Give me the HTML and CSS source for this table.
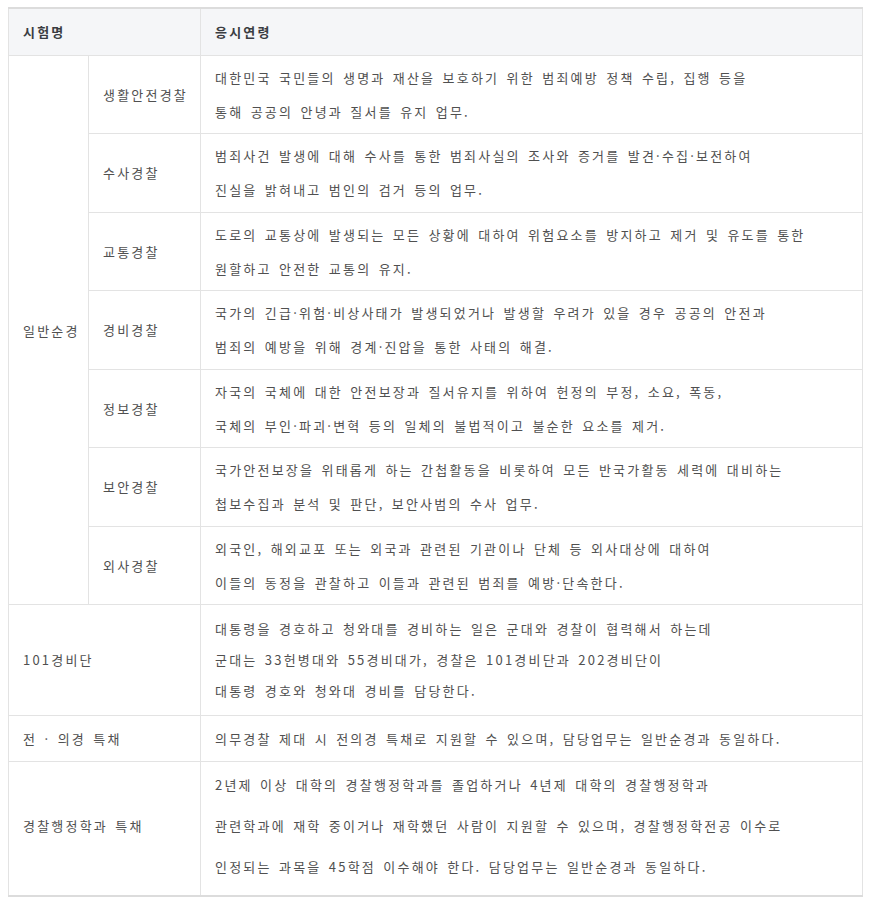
FILE: index.html
```html
<!DOCTYPE html>
<html lang="ko">
<head>
<meta charset="utf-8">
<link rel="stylesheet" href="styles.css">
</head>
<body>
<table class="exam">
  <colgroup>
    <col class="c-a">
    <col class="c-b">
    <col class="c-c">
  </colgroup>
  <thead>
    <tr>
      <th colspan="2">시험명</th>
      <th>응시연령</th>
    </tr>
  </thead>
  <tbody>
    <tr class="r2">
      <td rowspan="7" class="nowrap">일반순경</td>
      <td class="nowrap">생활안전경찰</td>
      <td>대한민국 국민들의 생명과 재산을 보호하기 위한 범죄예방 정책 수립, 집행 등을<br>통해 공공의 안녕과 질서를 유지 업무.</td>
    </tr>
    <tr class="r2 tall">
      <td>수사경찰</td>
      <td>범죄사건 발생에 대해 수사를 통한 범죄사실의 조사와 증거를 발견·수집·보전하여<br>진실을 밝혀내고 범인의 검거 등의 업무.</td>
    </tr>
    <tr class="r2">
      <td>교통경찰</td>
      <td>도로의 교통상에 발생되는 모든 상황에 대하여 위험요소를 방지하고 제거 및 유도를 통한<br>원할하고 안전한 교통의 유지.</td>
    </tr>
    <tr class="r2 tall">
      <td>경비경찰</td>
      <td>국가의 긴급·위험·비상사태가 발생되었거나 발생할 우려가 있을 경우 공공의 안전과<br>범죄의 예방을 위해 경계·진압을 통한 사태의 해결.</td>
    </tr>
    <tr class="r2">
      <td>정보경찰</td>
      <td>자국의 국체에 대한 안전보장과 질서유지를 위하여 헌정의 부정, 소요, 폭동,<br>국체의 부인·파괴·변혁 등의 일체의 불법적이고 불순한 요소를 제거.</td>
    </tr>
    <tr class="r2 tall">
      <td>보안경찰</td>
      <td>국가안전보장을 위태롭게 하는 간첩활동을 비롯하여 모든 반국가활동 세력에 대비하는<br>첩보수집과 분석 및 판단, 보안사범의 수사 업무.</td>
    </tr>
    <tr class="r2">
      <td>외사경찰</td>
      <td>외국인, 해외교포 또는 외국과 관련된 기관이나 단체 등 외사대상에 대하여<br>이들의 동정을 관찰하고 이들과 관련된 범죄를 예방·단속한다.</td>
    </tr>
    <tr class="r3">
      <td colspan="2">101경비단</td>
      <td>대통령을 경호하고 청와대를 경비하는 일은 군대와 경찰이 협력해서 하는데<br>군대는 33헌병대와 55경비대가, 경찰은 101경비단과 202경비단이<br>대통령 경호와 청와대 경비를 담당한다.</td>
    </tr>
    <tr class="r1">
      <td colspan="2">전 · 의경 특채</td>
      <td>의무경찰 제대 시 전의경 특채로 지원할 수 있으며, 담당업무는 일반순경과 동일하다.</td>
    </tr>
    <tr class="r3w">
      <td colspan="2">경찰행정학과 특채</td>
      <td>2년제 이상 대학의 경찰행정학과를 졸업하거나 4년제 대학의 경찰행정학과<br>관련학과에 재학 중이거나 재학했던 사람이 지원할 수 있으며, 경찰행정학전공 이수로<br>인정되는 과목을 45학점 이수해야 한다. 담당업무는 일반순경과 동일하다.</td>
    </tr>
  </tbody>
</table>
</body>
</html>
```

FILE: styles.css
```css
html, body {
  margin: 0;
  padding: 0;
  background: #ffffff;
}

.exam {
  margin: 7px 0 0 8px;
  width: 855px;
  border-collapse: collapse;
  table-layout: fixed;
  border-top: 2px solid #dcdcdc;
  border-bottom: 2px solid #dcdcdc;
  font-family: "Noto Sans CJK KR", "Noto Sans", sans-serif;
  font-size: 13px;
  letter-spacing: 2.2px;
  word-spacing: 1.5px;
  color: #505050;
}

.c-a { width: 80px; }
.c-b { width: 112px; }
.c-c { width: auto; }

.exam th,
.exam td {
  border: 1px solid #e3e3e3;
  text-align: left;
  vertical-align: middle;
  padding: 0 14px;
  font-weight: normal;
}

.exam .nowrap {
  white-space: nowrap;
  padding-right: 0;
}

.exam th {
  background: #f5f6f8;
  color: #3a3d42;
  font-weight: bold;
  height: 46px;
  padding-top: 0;
  padding-bottom: 0;
  line-height: 46px;
}

.r2 td {
  line-height: 34px;
  padding-top: 5px;
  padding-bottom: 4px;
}

.r2.tall td {
  padding-bottom: 5px;
}

.r3 td {
  line-height: 31px;
  padding-top: 8px;
  padding-bottom: 9px;
}

.r1 td {
  line-height: 31px;
  padding-top: 7px;
  padding-bottom: 7px;
}

.r3w td {
  line-height: 41px;
  padding-top: 2px;
  padding-bottom: 8px;
}
```
